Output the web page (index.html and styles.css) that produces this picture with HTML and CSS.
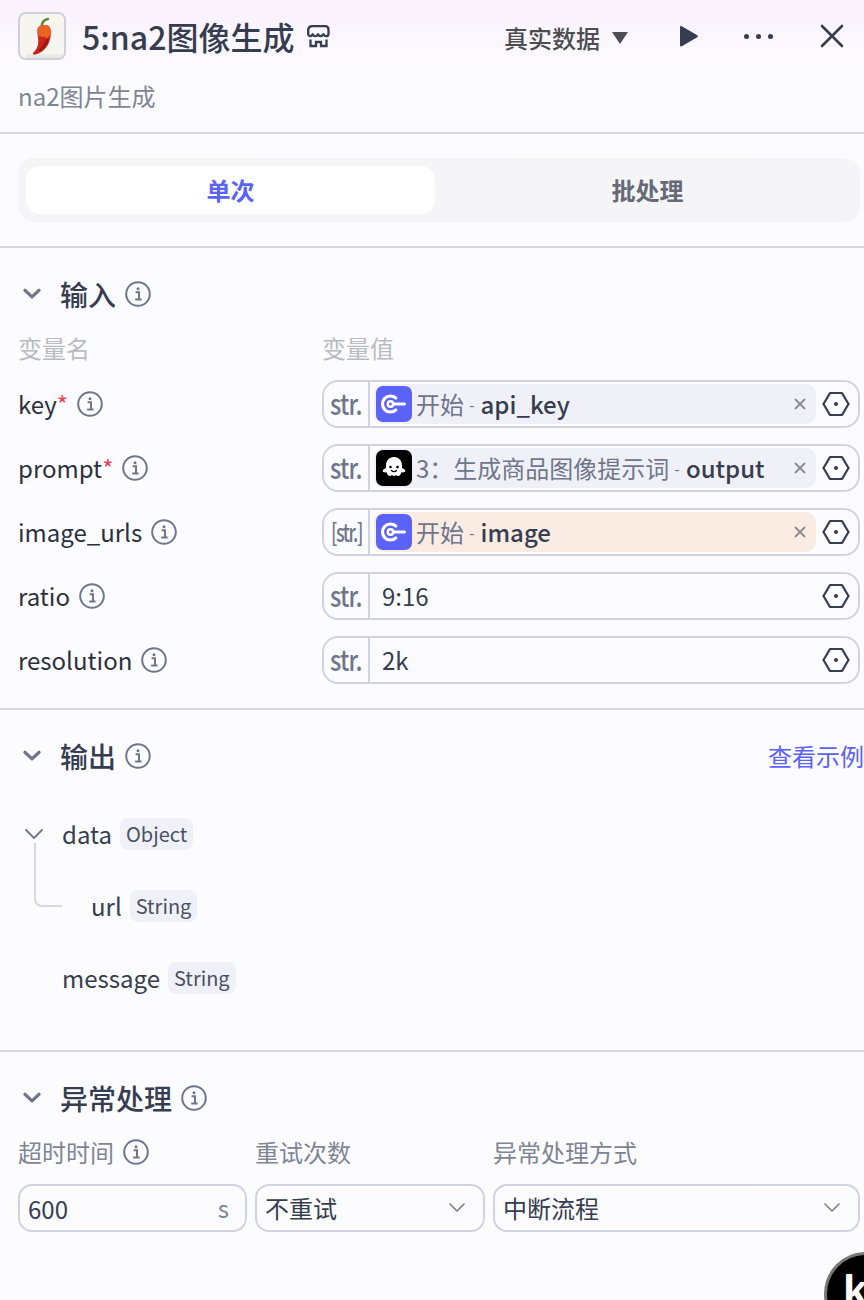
FILE: index.html
```html
<!DOCTYPE html>
<html lang="zh">
<head>
<meta charset="utf-8">
<title>5:na2图像生成</title>
<link rel="stylesheet" href="styles.css">
</head>
<body>
<svg class="defs" width="0" height="0">
  <defs>
    <symbol id="info" viewBox="0 0 26 26">
      <circle cx="13" cy="13" r="11.8" fill="none" stroke="#6f768c" stroke-width="2"/>
      <circle cx="13" cy="7.8" r="1.5" fill="#6f768c"/>
      <path d="M10.6 11.2h3.4v7M10.2 18.6h6.4" fill="none" stroke="#6f768c" stroke-width="2"/>
    </symbol>
    <symbol id="chev" viewBox="0 0 24 24">
      <path d="M3.5 7.5 12 15.5l8.5-8" fill="none" stroke="#6f768c" stroke-width="3.8" stroke-linecap="round" stroke-linejoin="round"/>
    </symbol>
    <symbol id="hex" viewBox="0 0 28 26">
      <path d="M8 2h12l6.5 11L20 24H8L1.5 13z" fill="none" stroke="#363d50" stroke-width="2.2" stroke-linejoin="round"/>
      <circle cx="14" cy="13" r="2" fill="#363d50"/>
    </symbol>
    <symbol id="start" viewBox="0 0 36 36">
      <rect width="36" height="36" rx="7" fill="#5b62f8"/>
      <path d="M19.800 12a8 8 0 1 0 0 12" fill="none" stroke="#fff" stroke-width="3.200" stroke-linecap="round"/>
      <circle cx="14.500" cy="18" r="2.800" fill="none" stroke="#fff" stroke-width="2.400"/>
      <path d="M17 18h11.500" stroke="#fff" stroke-width="3" stroke-linecap="round"/>
    </symbol>
    <symbol id="ghost" viewBox="0 0 36 36">
      <rect width="36" height="36" rx="7" fill="#000"/>
      <path d="M18 7c-5 0-8 3.800-8 8.500v2.500c-1.800.8-3.300 1.800-3.300 3 0 1.400 2.300 1.500 3.800 1.300.8 2.400 1.800 3.700 3.500 3.700 1 0 1.800-.7 2.400-.7s1.200.9 1.600.9.900-.9 1.600-.9 1.400.7 2.400.7c1.700 0 2.700-1.300 3.500-3.700 1.500.2 3.800.1 3.800-1.300 0-1.200-1.500-2.200-3.300-3v-2.500C26 10.800 23 7 18 7z" fill="#fff"/>
      <circle cx="14.500" cy="17" r="1.300" fill="#000"/>
      <circle cx="21.500" cy="17" r="1.300" fill="#000"/>
      <path d="M15.500 20.500c1.300 1.400 3.700 1.400 5 0" fill="none" stroke="#000" stroke-width="1.300" stroke-linecap="round"/>
    </symbol>
    <symbol id="x" viewBox="0 0 12 12">
      <path d="M1 1l10 10M11 1 1 11" fill="none" stroke="#8a8a90" stroke-width="1.800"/>
    </symbol>
    <symbol id="down" viewBox="0 0 16 10">
      <path d="M1 1l7 7 7-7" fill="none" stroke="#7b7f8c" stroke-width="1.600" stroke-linecap="round" stroke-linejoin="round"/>
    </symbol>
  </defs>
</svg>

<header class="head">
  <div class="head-row">
    <div class="logo">
      <svg viewBox="0 0 44 44" width="44" height="44">
        <rect width="44" height="44" fill="#f6f5ef"/>
        <path d="M6 40.500h38v3.500H6z" fill="#e9e8e3"/>
        <path d="M28 5c-3.500.5-6 3-6.500 7.500" fill="none" stroke="#5f8a2e" stroke-width="2.400" stroke-linecap="round"/>
        <path d="M18 13.500c3-3 9-3.500 11.500-.5 2 2.800 1.800 8.500 0 14-2 6-7 12-14 13.500-2.800.5-3.500-.8-1.700-2.500 3.200-3 4.700-6.500 4.500-11.500-.2-4.500-1.800-9.500-.3-13z" fill="#c8261a"/>
        <path d="M18 13.500c3-3 9-3.500 11.500-.5 1.700 2.300 1.800 6.500 1 10.500-1.500-1.800-3-1-3.800 1.500-1-2.700-3-3.500-4-1.500-1-1.500-2.400-1.700-3.700-.8-.8-3.500-1.700-6.700-1-9.200z" fill="#ea6324"/>
        <path d="M20 36c3.500-2.500 6-6 7.500-10" fill="none" stroke="#9d1712" stroke-width="2.500" stroke-linecap="round"/>
      </svg>
    </div>
    <h1 class="title">5:na2图像生成</h1>
    <svg class="store" viewBox="0 0 24 24" width="24" height="24">
      <path d="M6 2.200h13c2.200 0 3.500 1.500 3.500 3.500v4c0 1.500-1 2.500-2.300 2.500-1.300 0-2.200-1-2.700-2-.6 1-1.700 2-2.900 2-1.200 0-2.200-1-2.600-2-.5 1-1.500 2-2.700 2-1.300 0-2.200-1-2.700-2-.5 1-1 2-2.200 2-1.100 0-2.200-1-2.200-2.500v-4C2.500 3.700 4 2.200 6 2.200z" fill="none" stroke="#363d50" stroke-width="2.300" stroke-linejoin="round"/>
      <path d="M4.500 15.500v6.500h5.500v-4h5v4h5.500v-6.500" fill="none" stroke="#363d50" stroke-width="2.300"/>
    </svg>
    <div class="mode">真实数据<span class="tri"></span></div>
    <svg class="play" viewBox="0 0 20 22" width="20" height="22"><path d="M1 2.200c0-.9 1-1.500 1.800-1l15.500 9c.8.400.8 1.600 0 2L2.800 21.200c-.8.500-1.800-.1-1.800-1z" fill="#363d50"/></svg>
    <div class="dots"><i></i><i></i><i></i></div>
    <svg class="close" viewBox="0 0 24 24" width="24" height="24"><path d="M2 2l20 20M22 2 2 22" fill="none" stroke="#363d50" stroke-width="2.600" stroke-linecap="round"/></svg>
  </div>
  <p class="sub">na2图片生成</p>
</header>

<section class="tabs-wrap">
  <div class="tabs">
    <div class="tab active">单次</div>
    <div class="tab">批处理</div>
  </div>
</section>

<section class="block inputs">
  <div class="sec-head">
    <svg class="sec-chev"><use href="#chev"/></svg>
    <h2>输入</h2>
    <svg class="info"><use href="#info"/></svg>
  </div>
  <div class="grid-head"><span>变量名</span><span>变量值</span></div>
  <div class="rows">
    <div class="row">
      <div class="name">key<em>*</em><svg class="info"><use href="#info"/></svg></div>
      <div class="field">
        <div class="type"><span>str.</span></div>
        <div class="val"><div class="chip">
          <svg class="chip-ico"><use href="#start"/></svg>
          <span class="src">开始</span><span class="sep">-</span><span class="var">api_key</span>
          <svg class="chip-x"><use href="#x"/></svg>
        </div></div>
        <svg class="hex"><use href="#hex"/></svg>
      </div>
    </div>
    <div class="row">
      <div class="name">prompt<em>*</em><svg class="info"><use href="#info"/></svg></div>
      <div class="field">
        <div class="type"><span>str.</span></div>
        <div class="val"><div class="chip">
          <svg class="chip-ico"><use href="#ghost"/></svg>
          <span class="src">3：生成商品图像提示词</span><span class="sep">-</span><span class="var">output</span>
          <svg class="chip-x"><use href="#x"/></svg>
        </div></div>
        <svg class="hex"><use href="#hex"/></svg>
      </div>
    </div>
    <div class="row">
      <div class="name">image_urls<svg class="info"><use href="#info"/></svg></div>
      <div class="field">
        <div class="type arr"><span>[str.]</span></div>
        <div class="val"><div class="chip warn">
          <svg class="chip-ico"><use href="#start"/></svg>
          <span class="src">开始</span><span class="sep">-</span><span class="var">image</span>
          <svg class="chip-x"><use href="#x"/></svg>
        </div></div>
        <svg class="hex"><use href="#hex"/></svg>
      </div>
    </div>
    <div class="row">
      <div class="name">ratio<svg class="info"><use href="#info"/></svg></div>
      <div class="field">
        <div class="type"><span>str.</span></div>
        <div class="val text">9:16</div>
        <svg class="hex"><use href="#hex"/></svg>
      </div>
    </div>
    <div class="row">
      <div class="name">resolution<svg class="info"><use href="#info"/></svg></div>
      <div class="field">
        <div class="type"><span>str.</span></div>
        <div class="val text">2k</div>
        <svg class="hex"><use href="#hex"/></svg>
      </div>
    </div>
  </div>
</section>

<section class="block outputs">
  <div class="sec-head">
    <svg class="sec-chev"><use href="#chev"/></svg>
    <h2>输出</h2>
    <svg class="info"><use href="#info"/></svg>
    <a class="example">查看示例</a>
  </div>
  <div class="tree">
    <div class="node">
      <svg class="node-chev" viewBox="0 0 18 10" width="18" height="10"><path d="M1 1l8 8 8-8" fill="none" stroke="#6f768c" stroke-width="1.800" stroke-linecap="round" stroke-linejoin="round"/></svg>
      <span class="key">data</span><span class="tag">Object</span>
    </div>
    <div class="node child">
      <span class="elbow"></span>
      <span class="key">url</span><span class="tag">String</span>
    </div>
    <div class="node">
      <span class="key">message</span><span class="tag">String</span>
    </div>
  </div>
</section>

<section class="block errors">
  <div class="sec-head">
    <svg class="sec-chev"><use href="#chev"/></svg>
    <h2>异常处理</h2>
    <svg class="info"><use href="#info"/></svg>
  </div>
  <div class="err-grid">
    <div class="err-col">
      <label>超时时间<svg class="info"><use href="#info"/></svg></label>
      <div class="box"><span class="num">600</span><span class="unit">s</span></div>
    </div>
    <div class="err-col">
      <label>重试次数</label>
      <div class="box"><span>不重试</span><svg class="down"><use href="#down"/></svg></div>
    </div>
    <div class="err-col">
      <label>异常处理方式</label>
      <div class="box"><span>中断流程</span><svg class="down"><use href="#down"/></svg></div>
    </div>
  </div>
</section>

<div class="fab"><span>k</span></div>
</body>
</html>
```
FILE: styles.css
```css
* { box-sizing: border-box; }
html, body { height: 100%; }
body {
  margin: 0;
  width: 864px;
  height: 1300px;
  overflow: hidden;
  position: relative;
  background: linear-gradient(180deg, #faf1fe 0, #fcfbff 70px, #fcfcff 100%);
  font-family: "Noto Sans CJK SC", "Noto Sans", sans-serif;
  color: #363d50;
  font-size: 24px;
  line-height: 32px;
}
.defs { position: absolute; }

.head { height: 134px; padding: 12px 18px 0; border-bottom: 2px solid #d6d8e2; }
.head-row { display: flex; align-items: center; height: 48px; }
.logo {
  width: 48px; height: 48px; border: 2px solid #ccd0da; border-radius: 8px;
  overflow: hidden; background: #f7f6f0; flex: none;
}
.logo svg { display: block; }
.title { margin: 0 0 0 16px; font-size: 32px; line-height: 48px; font-weight: 500; color: #363d50; }
.store { margin: 0 0 0 12px; }
.mode { margin: 4px 0 0 auto; font-weight: 500; color: #4d4d52; display: flex; align-items: center; }
.tri {
  width: 0; height: 0; margin: 0 0 0 12px;
  border-left: 8px solid transparent; border-right: 8px solid transparent; border-top: 12px solid #4d4d52;
}
.play { margin-left: 51px; }
.dots { display: flex; gap: 7px; margin-left: 45px; }
.dots i { width: 5px; height: 5px; border-radius: 50%; background: #363d50; }
.close { margin: 0 2px 0 47px; }
.sub { margin: 20px 0 0; color: #7f8595; }

.tabs-wrap { height: 114px; padding: 24px 4px 0 18px; border-bottom: 2px solid #d6d8e2; }
.tabs { display: flex; height: 64px; padding: 8px 0 8px 8px; background: #f5f5f7; border-radius: 16px; }
.tab { flex: 1; display: flex; align-items: center; justify-content: center; border-radius: 14px; font-weight: 700; color: #666a76; }
.tab.active { flex: 0 0 409px; background: #fff; color: #5b62f8; }

.block { border-bottom: 2px solid #d6d8e2; }
.sec-head { display: flex; align-items: center; height: 40px; padding-left: 22px; }
.sec-chev { width: 20px; height: 20px; }
.sec-head h2 { margin: 0 0 0 18px; font-size: 28px; line-height: 40px; font-weight: 500; color: #363d50; }
.info { width: 26px; height: 26px; margin-left: 9px; flex: none; }

.inputs { height: 462px; padding: 26px 4px 0 18px; }
.inputs .sec-head { margin-left: -18px; padding-left: 22px; }
.grid-head { display: grid; grid-template-columns: 304px 1fr; margin-top: 18px; color: #b9bbc1; height: 32px; }
.rows { display: flex; flex-direction: column; gap: 16px; margin-top: 16px; }
.row { display: grid; grid-template-columns: 304px 1fr; height: 48px; }
.name { display: flex; align-items: center; color: #2b3040; }
.name em { color: #f03d52; font-style: normal; align-self: flex-start; margin: 8px 0 0; }
.field { display: flex; align-items: center; border: 2px solid #d0d3e3; border-radius: 16px; height: 48px; }
.type {
  width: 46px; height: 44px; flex: none; display: flex; align-items: center; justify-content: center;
  border-right: 2px solid #d0d3e3; font-size: 28px; font-weight: 500; color: #6f768c; letter-spacing: -1px;
}
.type span { display: block; transform: translateY(-1px) scaleX(.84); }
.type.arr { font-size: 25px; letter-spacing: -2px; }
.type.arr span { transform: translateY(-1px) scaleX(.72); }
.val { flex: 1; min-width: 0; padding-left: 4px; }
.val.text { padding-left: 12px; color: #363d50; }
.chip { display: flex; align-items: center; height: 40px; background: #f0f1f8; border-radius: 10px; padding: 0 10px 0 2px; }
.chip.warn { background: #faece3; }
.chip-ico { width: 36px; height: 36px; flex: none; }
.src { margin-left: 4px; color: #6f768c; white-space: nowrap; }
.sep { margin: 0 6px 0 5px; color: #6f768c; font-size: 16px; }
.var { color: #363d50; font-weight: 500; white-space: nowrap; }
.chip-x { width: 12px; height: 12px; margin-left: auto; }
.hex { width: 28px; height: 26px; margin: 0 8px 0 6px; flex: none; }

.outputs { height: 342px; padding-top: 26px; position: relative; }
.example { margin-left: auto; color: #5b62f8; white-space: nowrap; }
.tree { margin-top: 40px; display: flex; flex-direction: column; gap: 36px; padding-left: 62px; }
.node { display: flex; align-items: center; height: 36px; position: relative; }
.node-chev { position: absolute; left: -37px; top: 13px; }
.child { padding-left: 29px; }
.elbow {
  position: absolute; left: -28px; top: -45px; width: 28px; height: 64px;
  border-left: 2px solid #d6d8e2; border-bottom: 2px solid #d6d8e2; border-bottom-left-radius: 8px;
}
.key { color: #363d50; }
.tag {
  margin-left: 8px; height: 32px; padding: 0 6px; background: #f0f1f8; border-radius: 8px;
  font-size: 20px; line-height: 32px; color: #4a5062;
}

.errors { border-bottom: 0; padding-top: 26px; }
.err-grid { display: flex; gap: 8px; padding: 18px 4px 0 18px; }
.err-col { display: flex; flex-direction: column; gap: 16px; width: 230px; }
.err-col:first-child { width: 229px; }
.err-col:last-child { width: 367px; }
.err-col label { display: flex; align-items: center; height: 32px; color: #7f8595; font-weight: 400; }
.box {
  height: 48px; border: 2px solid #d0d3e3; border-radius: 14px; display: flex; align-items: center;
  justify-content: space-between; padding: 0 16px 0 8px; color: #363d50;
}
.num { padding-top: 2px; }
.unit { color: #7f8595; }
.down { width: 16px; height: 10px; margin-right: 2px; }

.fab {
  position: absolute; left: 824px; top: 1252px; width: 84px; height: 84px; border-radius: 50%;
  background: #000; border: 3px solid #777; overflow: hidden;
}
.fab span {
  position: absolute; left: 16px; top: 13px; color: #fff; font-family: "Liberation Sans", sans-serif;
  font-size: 44px; line-height: 46px; font-weight: 700;
}
```
